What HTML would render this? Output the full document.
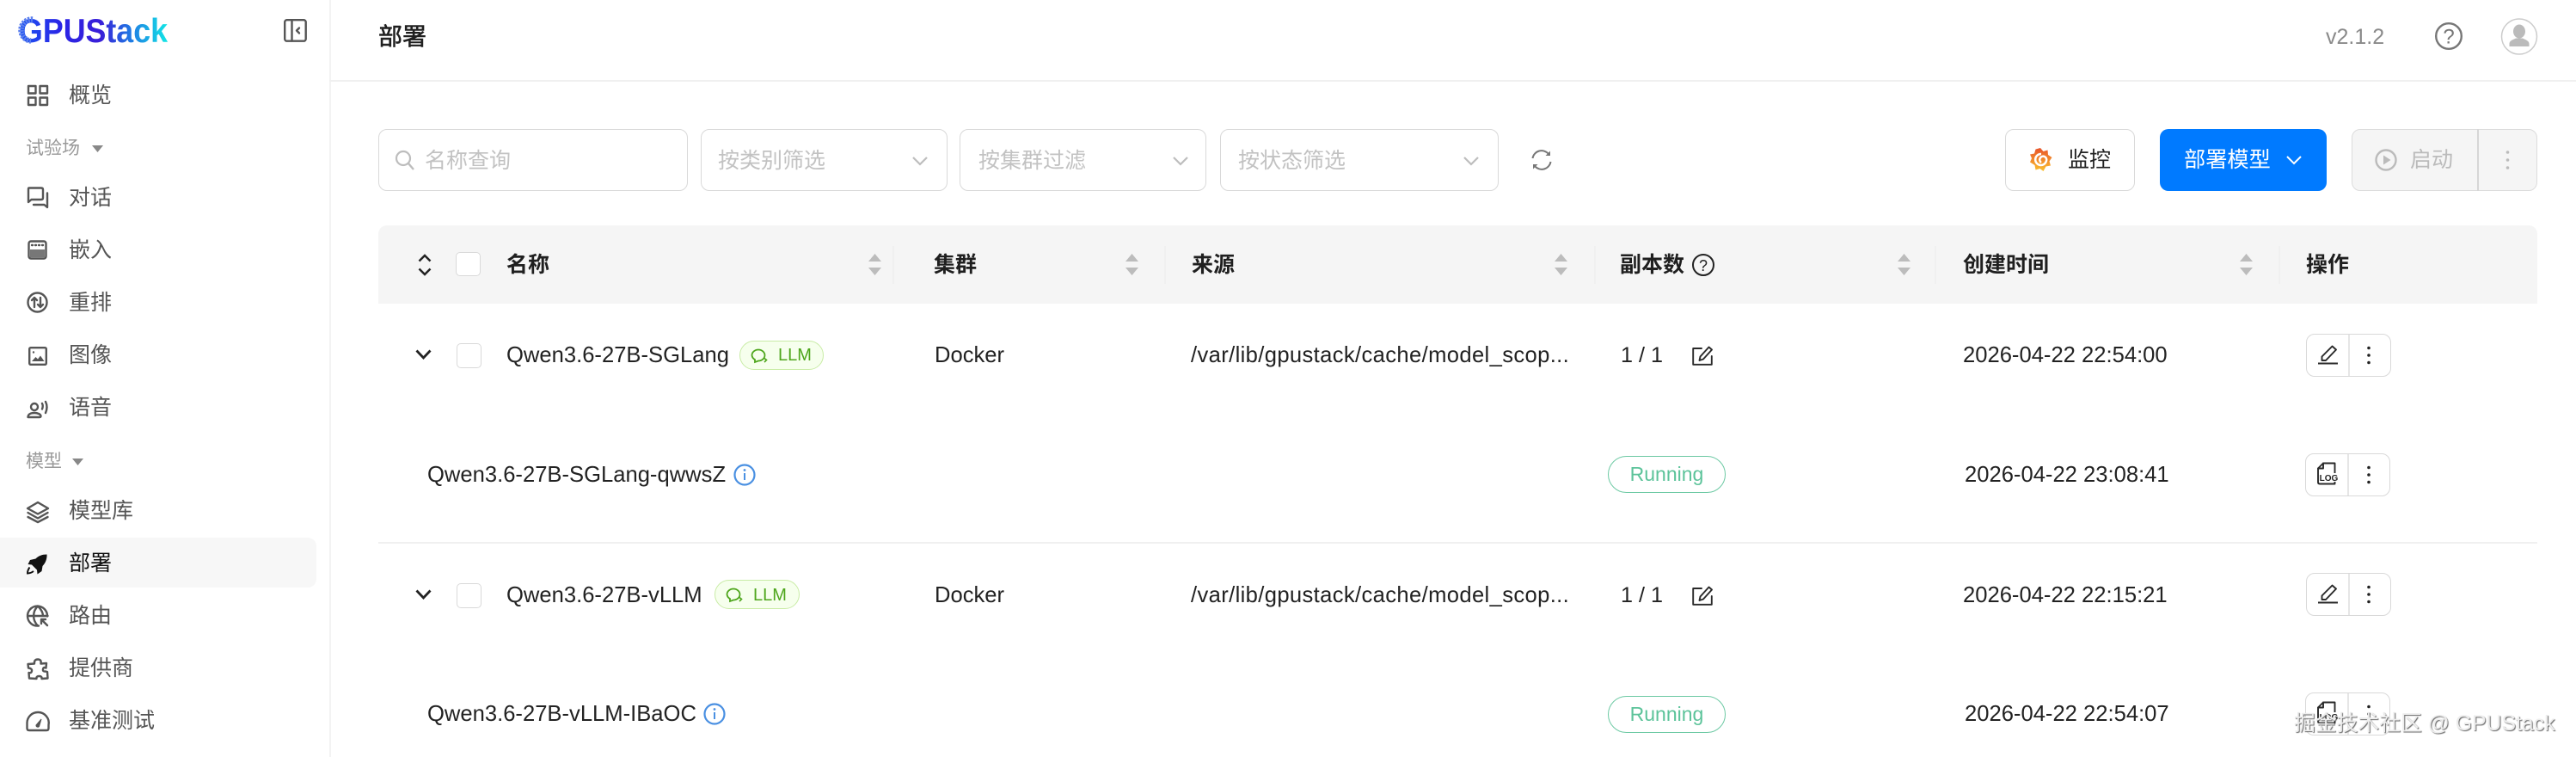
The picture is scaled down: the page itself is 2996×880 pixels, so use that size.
<!DOCTYPE html>
<html lang="zh">
<head>
<meta charset="utf-8">
<title>部署</title>
<style>
html,body{margin:0;padding:0;width:2996px;height:880px;overflow:hidden;background:#fff;}
body{position:relative;font-family:"Liberation Sans","Noto Sans CJK SC",sans-serif;font-size:25.6px;color:#222;}
.t{position:absolute;white-space:nowrap;line-height:36px;transform:translateY(-50%);}
.b{position:absolute;box-sizing:border-box;}
svg{position:absolute;overflow:visible;}
.nav{color:#555;font-size:25px;left:80px;}
.grp{color:#999;font-size:21px;left:30px;}
.ph{color:#c2c2c2;font-size:25px;}
.box{border:1.5px solid #d9d9d9;border-radius:10px;background:#fff;top:150px;height:72px;}
.th{font-weight:700;color:#1f1f1f;font-size:25px;top:308px;}
.cb{border:1.5px solid #d9d9d9;border-radius:5px;background:#fff;width:29px;height:29px;left:531px;}
.op{border:1.5px solid #d9d9d9;border-radius:10px;width:99px;height:50px;left:2682px;background:#fff;}
.op:after{content:"";position:absolute;left:48px;top:0;bottom:0;width:1.5px;background:#e6e6e6;}
.run{left:1870px;width:137px;height:43px;border:1.5px solid #6cc9a3;border-radius:22px;color:#5cc39a;font-size:23px;line-height:40px;text-align:center;}
.tag{height:34px;border:1.5px solid #c9eca6;border-radius:17px;background:#f6ffed;}
.tagt{color:#4ea61c;font-size:20px;}
.src{left:1385px;letter-spacing:.36px;}
.st{stroke:#555;fill:none;stroke-width:2.4;stroke-linecap:round;stroke-linejoin:round;}
.dk{stroke:#2a2a2a;fill:none;stroke-width:1.9;stroke-linecap:round;stroke-linejoin:round;}
</style>
</head>
<body>
<!-- sidebar -->
<div class="b" style="left:383px;top:0;width:1.5px;height:880px;background:#f3f3f3"></div>
<div class="b" style="left:383px;top:93px;width:2613px;height:1.5px;background:#f0f0f0"></div>

<svg style="left:0;top:0" width="210" height="70" viewBox="0 0 210 70">
<defs><linearGradient id="lg" gradientUnits="userSpaceOnUse" x1="22" y1="0" x2="195" y2="0">
<stop offset="0" stop-color="#1c55f2"/><stop offset=".28" stop-color="#2a25e6"/><stop offset=".55" stop-color="#3a20d8"/><stop offset=".75" stop-color="#2079e4"/><stop offset="1" stop-color="#12e6e6"/></linearGradient></defs>
<text x="22" y="49" font-family="Liberation Sans" font-weight="700" font-size="38.5" fill="url(#lg)" textLength="173" lengthAdjust="spacingAndGlyphs">GPUStack</text>
<path d="M36 19 A15.500 15.500 0 0 0 36 51 L20 51 L20 19Z" fill="#fff"/>
<path d="M38 22.500 A12.500 12.500 0 0 0 36 47.500" fill="none" stroke="#5b7fee" stroke-width="6.500" stroke-dasharray="2.200 1.200"/>
</svg>
<svg style="left:330px;top:22px" width="27" height="27" viewBox="0 0 27 27"><rect x="1.200" y="1.200" width="24.500" height="24.500" rx="2.500" class="st"/><path d="M9.500 1.500V25.500M18 10.500l-3 3 3 3" class="st"/></svg>

<!-- nav icons -->
<svg style="left:32px;top:99px" width="24" height="24" viewBox="0 0 24 24"><path d="M1 1h8.500v8.500H1zM14.500 1H23v8.500h-8.500zM1 14.500h8.500V23H1zM14.500 14.500H23V23h-8.500z" class="st"/></svg>
<svg style="left:31px;top:217px" width="26" height="26" viewBox="0 0 26 26"><path d="M17 15H5.500L2 18V2.500Q2 1.500 3 1.500H17Q19 1.500 19 3.500V13Q19 15 17 15Z" class="st"/><path d="M24 7.500V24L20.500 21H8" class="st"/></svg>
<svg style="left:32px;top:279px" width="23" height="23" viewBox="0 0 23 23"><rect x="1.500" y="1.500" width="20" height="20" rx="2.500" class="st"/><rect x="3" y="11" width="17" height="9" fill="#777"/><path d="M5 6h1M9 6h1M13 6h1M17 6h1" class="st" stroke-width="1.500"/></svg>
<svg style="left:31px;top:339px" width="25" height="25" viewBox="0 0 25 25"><circle cx="12.500" cy="12.500" r="11" class="st"/><path d="M9 18V7M6 10l3-3 3 3M16 7v11M13 15l3 3 3-3" class="st" stroke-width="1.800"/></svg>
<svg style="left:33px;top:403px" width="22" height="22" viewBox="0 0 22 22"><rect x="1.200" y="1.200" width="19.600" height="19.600" rx="1.500" class="st" stroke-width="2"/><circle cx="6" cy="6.500" r="1.200" fill="#555"/><path d="M4 17l4.500-5 2.500 2.500 3-4 4.500 6.500z" fill="#555"/></svg>
<svg style="left:31px;top:465px" width="26" height="22" viewBox="0 0 26 22"><circle cx="9" cy="8" r="4" class="st" stroke-width="2"/><path d="M1.500 20c0-3.500 3.500-5 7.500-5s7 1.500 7.500 3.500q0 1.500-1.500 1.500z" class="st" stroke-width="2"/><path d="M18 4q1.500 3 0 6.500M22 2q3 6 0 13" class="st" stroke-width="1.800"/></svg>
<svg style="left:31px;top:582px" width="26" height="26" viewBox="0 0 26 26"><path d="M13 2L25 9 13 15.500 1 9zM1.500 14L13 20.500 24.500 14M1.500 19L13 25 24.500 19" class="st" stroke-width="2"/></svg>
<svg style="left:31px;top:703px" width="26" height="26" viewBox="0 0 26 26"><path d="M14 24.500a11.500 11.500 0 1 1 10-11M1.500 13H24.500M13 1.500C6.500 8 6.500 18 13 24.500M13 1.500C17 5.500 19 9.500 19 13" class="st" stroke-width="2"/><path d="M17 17h5M17 17v5M17 17l7 7" class="st" stroke-width="2.200"/></svg>
<svg style="left:31px;top:765px" width="26" height="25" viewBox="0 0 26 25"><path d="M9 6.500q-.5-5 4-5t3.500 5L23 6l-.5 5.500q-3-1.500-3.500 1.500t3 2.500L24 16l.5 7.500-7 .5q.5-3-3-3t-3 3L3 23.500l-.5-6.500q3 1 3.500-2t-4-3.500L1.500 7z" class="st" stroke-width="2.200"/></svg>
<svg style="left:30px;top:826px" width="28" height="24" viewBox="0 0 28 24"><path d="M4 23h20q2.500 0 2.500-2.500V17A12.500 12.500 0 0 0 14 2 12.500 12.500 0 0 0 1.500 14v6.500Q1.500 23 4 23z" class="st" stroke-width="2.200"/><path d="M12 17l6-7-2.500 8.500a2 2 0 0 1-3.500-1.500z" fill="#555" stroke="#555"/></svg>

<div class="b" style="left:0;top:625px;width:368px;height:58px;background:#f7f7f7;border-radius:0 10px 10px 0"></div>
<svg style="left:31px;top:643px" width="25" height="25" viewBox="0 0 25 25"><path d="M23.500 1c.5 6-2 11-5 14l-1 6-5 3.500-.5-5-6-6-4.500-.5 2.500-5 6.500-1.500c3.500-3.500 7.500-5 13-5z" fill="#111"/><path d="M9.500 19l-3-3" stroke="#f7f7f7" stroke-width="2" fill="none"/><path d="M3.500 16.500c-1.500 2-2.500 4.500-2.500 7 2.500 0 5-1 7-2.500" fill="none" stroke="#111" stroke-width="2"/></svg>

<div class="t nav" style="top:111px">概览</div>
<div class="t grp" style="top:173px">试验场</div>
<svg style="left:107px;top:169px" width="13" height="8"><path d="M0 0H13L6.500 8z" fill="#888"/></svg>
<div class="t nav" style="top:230px">对话</div>
<div class="t nav" style="top:291px">嵌入</div>
<div class="t nav" style="top:352px">重排</div>
<div class="t nav" style="top:413px">图像</div>
<div class="t nav" style="top:474px">语音</div>
<div class="t grp" style="top:537px">模型</div>
<svg style="left:84px;top:533px" width="13" height="8"><path d="M0 0H13L6.500 8z" fill="#888"/></svg>
<div class="t nav" style="top:594px">模型库</div>
<div class="t nav" style="top:655px;color:#111">部署</div>
<div class="t nav" style="top:716px">路由</div>
<div class="t nav" style="top:777px">提供商</div>
<div class="t nav" style="top:838px">基准测试</div>

<!-- header -->
<div class="t" style="left:440px;top:43px;font-size:28px;color:#1f1f1f;-webkit-text-stroke:.6px #1f1f1f">部署</div>
<div class="t" style="left:2705px;top:43px;font-size:25px;color:#8a8a8a">v2.1.2</div>
<svg style="left:2832px;top:26px" width="32" height="32" viewBox="0 0 32 32"><circle cx="16" cy="16" r="14.800" fill="none" stroke="#777" stroke-width="2.400"/><text x="16" y="24.500" text-anchor="middle" font-size="24" font-family="Liberation Sans" fill="#777">?</text></svg>
<svg style="left:2909px;top:21px" width="42" height="43" viewBox="0 0 42 43"><circle cx="21" cy="21.500" r="20.500" fill="#fff" stroke="#ccc" stroke-width="1.500"/><ellipse cx="21" cy="15.500" rx="7" ry="8" fill="#bbb"/><path d="M9.500 33v-3c0-4 5-5 7.500-6.500h8c2.500 1.500 7.500 2.500 7.500 6.500v3z" fill="#bbb"/></svg>

<!-- filters -->
<div class="b box" style="left:440px;width:360px"></div>
<svg style="left:459px;top:174px" width="24" height="24" viewBox="0 0 24 24"><circle cx="10" cy="10" r="8" fill="none" stroke="#bdbdbd" stroke-width="2.200"/><path d="M16 16l6 7" stroke="#bdbdbd" stroke-width="2.400" fill="none"/></svg>
<div class="t ph" style="left:494px;top:187px">名称查询</div>
<div class="b box" style="left:815px;width:287px"></div>
<div class="t ph" style="left:835px;top:187px">按类别筛选</div>
<svg style="left:1061px;top:182px" width="18" height="11"><path d="M1 1l8 8 8-8" fill="none" stroke="#bdbdbd" stroke-width="2.200"/></svg>
<div class="b box" style="left:1116px;width:287px"></div>
<div class="t ph" style="left:1138px;top:187px">按集群过滤</div>
<svg style="left:1364px;top:182px" width="18" height="11"><path d="M1 1l8 8 8-8" fill="none" stroke="#bdbdbd" stroke-width="2.200"/></svg>
<div class="b box" style="left:1419px;width:324px"></div>
<div class="t ph" style="left:1440px;top:187px">按状态筛选</div>
<svg style="left:1702px;top:182px" width="18" height="11"><path d="M1 1l8 8 8-8" fill="none" stroke="#bdbdbd" stroke-width="2.200"/></svg>
<svg style="left:1780px;top:173px" width="26" height="26" viewBox="0 0 26 26"><path d="M2.500 11A10.500 10.500 0 0 1 21 6" fill="none" stroke="#777" stroke-width="2"/><path d="M23.500 15A10.500 10.500 0 0 1 5 20" fill="none" stroke="#777" stroke-width="2"/><path d="M23 2.500v5.500h-5.500zM3 23.500V18h5.500z" fill="#777"/></svg>

<!-- buttons -->
<div class="b box" style="left:2332px;width:151px"></div>
<svg style="left:2360px;top:171px" width="27" height="29" viewBox="0 0 27 29"><defs><linearGradient id="gf" x1="0" y1="0" x2="0" y2="1"><stop offset="0" stop-color="#e8542c"/><stop offset="1" stop-color="#fbc02d"/></linearGradient></defs><path d="M13 1l3.500 4 5-1.500.5 5.500 4.500 3-3 4.500 1.500 5-5.500 1-3 5.500-4-3-5 1.500-1-5.500L1 17.500 3 13 1 8.500 6 7.500 7.500 2.500z" fill="url(#gf)"/><path d="M14 8a6.500 6.500 0 1 0 6 8 4 4 0 1 0-6 2" fill="none" stroke="#fff" stroke-width="2.500"/></svg>
<div class="t" style="left:2405px;top:186px;font-size:25px;color:#222">监控</div>
<div class="b" style="left:2512px;top:150px;width:194px;height:72px;background:#007aff;border-radius:10px"></div>
<div class="t" style="left:2540px;top:186px;font-size:25.2px;color:#fff">部署模型</div>
<svg style="left:2659px;top:181px" width="18" height="11"><path d="M1 1l8 8 8-8" fill="none" stroke="#fff" stroke-width="2"/></svg>
<div class="b" style="left:2735px;top:150px;width:216px;height:72px;background:#f5f5f5;border:1.5px solid #dcdcdc;border-radius:10px"></div>
<div class="b" style="left:2881px;top:150px;width:1.5px;height:72px;background:#d6d6d6"></div>
<svg style="left:2762px;top:173px" width="26" height="26" viewBox="0 0 26 26"><circle cx="13" cy="13" r="11.500" fill="none" stroke="#bbb" stroke-width="2.400"/><path d="M10 7.500l8.500 5.500-8.500 5.500z" fill="#bbb"/></svg>
<div class="t" style="left:2803px;top:186px;font-size:25px;color:#bbb">启动</div>
<svg style="left:2914px;top:174px" width="5" height="24"><circle cx="2.500" cy="3" r="1.800" fill="#bbb"/><circle cx="2.500" cy="12" r="1.800" fill="#bbb"/><circle cx="2.500" cy="21" r="1.800" fill="#bbb"/></svg>

<!-- table head -->
<div class="b" style="left:440px;top:262px;width:2511px;height:91px;background:#f5f5f5;border-radius:10px 10px 0 0"></div>
<div class="b" style="left:1038px;top:286px;width:1.5px;height:44px;background:#f0f0f0"></div>
<div class="b" style="left:1354px;top:286px;width:1.5px;height:44px;background:#f0f0f0"></div>
<div class="b" style="left:1854px;top:286px;width:1.5px;height:44px;background:#f0f0f0"></div>
<div class="b" style="left:2250px;top:286px;width:1.5px;height:44px;background:#f0f0f0"></div>
<div class="b" style="left:2650px;top:286px;width:1.5px;height:44px;background:#f0f0f0"></div>
<svg style="left:486px;top:295px" width="16" height="26"><path d="M1.500 8.500L8 2l6.500 6.500M1.500 17.500L8 24l6.500-6.500" fill="none" stroke="#222" stroke-width="2.500"/></svg>
<div class="b cb" style="top:293px;left:530px;height:28px"></div>
<div class="t th" style="left:589px">名称</div>
<div class="t th" style="left:1086px">集群</div>
<div class="t th" style="left:1386px">来源</div>
<div class="t th" style="left:1884px">副本数</div>
<div class="t th" style="left:2283px">创建时间</div>
<div class="t th" style="left:2682px">操作</div>
<svg style="left:1967px;top:294px" width="28" height="28" viewBox="0 0 28 28"><circle cx="14" cy="14" r="12" fill="none" stroke="#222" stroke-width="2"/><text x="14" y="21" text-anchor="middle" font-size="18" font-family="Liberation Sans" fill="#222">?</text></svg>
<svg style="left:1010px;top:295px" width="15" height="25"><path d="M0 9L7.500 0 15 9zM0 16H15L7.500 25z" fill="#bcbcbc"/></svg>
<svg style="left:1309px;top:295px" width="15" height="25"><path d="M0 9L7.500 0 15 9zM0 16H15L7.500 25z" fill="#bcbcbc"/></svg>
<svg style="left:1808px;top:295px" width="15" height="25"><path d="M0 9L7.500 0 15 9zM0 16H15L7.500 25z" fill="#bcbcbc"/></svg>
<svg style="left:2207px;top:295px" width="15" height="25"><path d="M0 9L7.500 0 15 9zM0 16H15L7.500 25z" fill="#bcbcbc"/></svg>
<svg style="left:2605px;top:295px" width="15" height="25"><path d="M0 9L7.500 0 15 9zM0 16H15L7.500 25z" fill="#bcbcbc"/></svg>

<!-- row 1 -->
<svg style="left:483px;top:406px" width="19" height="13"><path d="M1.500 1.500L9.500 10l8-8.500" fill="none" stroke="#222" stroke-width="2.800"/></svg>
<div class="b cb" style="top:399px"></div>
<div class="t" style="left:589px;top:413px">Qwen3.6-27B-SGLang</div>
<div class="b tag" style="left:860px;top:396px;width:98px"></div>
<svg style="left:873px;top:405px" width="20" height="18" viewBox="0 0 20 18"><path d="M9 1.500a7.500 6.500 0 0 1 7.500 6.500 7.500 6.500 0 0 1-7.500 6.500L5 16v-3A7 6.500 0 0 1 1.500 8 7.500 6.500 0 0 1 9 1.500z" fill="none" stroke="#4ea61c" stroke-width="1.800"/><path d="M16 11.500l2.500 2-2.500 2.500" fill="none" stroke="#4ea61c" stroke-width="1.600"/></svg>
<div class="t tagt" style="left:905px;top:413px">LLM</div>
<div class="t" style="left:1087px;top:413px">Docker</div>
<div class="t src" style="top:413px">/var/lib/gpustack/cache/model_scop...</div>
<div class="t" style="left:1885px;top:413px;font-size:25.2px">1 / 1</div>
<svg style="left:1968px;top:402px" width="24" height="23" viewBox="0 0 24 23"><path d="M11 3H1.200V21.800H22.800V12" class="dk" stroke-linecap="square"/><path d="M19.500 1.500L23 4.500 13 15.500 8.500 17 9.500 12.500z" class="dk"/></svg>
<div class="t" style="left:2283px;top:413px">2026-04-22 22:54:00</div>
<div class="b op" style="top:388px"></div>
<svg style="left:2696px;top:401px" width="23" height="23" viewBox="0 0 23 23"><path d="M16.500 1.500L21 5.500 9 18H4.500v-4.500z" class="dk"/><path d="M0 21.500H23" stroke="#2a2a2a" stroke-width="2"/></svg>
<svg style="left:2752px;top:402px" width="6" height="22"><circle cx="3" cy="2.500" r="1.800" fill="#222"/><circle cx="3" cy="11" r="1.800" fill="#222"/><circle cx="3" cy="19.500" r="1.800" fill="#222"/></svg>

<!-- sub row 1 -->
<div class="t" style="left:497px;top:552px">Qwen3.6-27B-SGLang-qwwsZ</div>
<svg style="left:853px;top:539px" width="26" height="26" viewBox="0 0 26 26"><circle cx="13" cy="13" r="11.500" fill="none" stroke="#4a90e2" stroke-width="2.200"/><path d="M13 11v8" stroke="#4a90e2" stroke-width="2"/><circle cx="13" cy="7.500" r="1.400" fill="#4a90e2"/></svg>
<div class="b run" style="top:530px">Running</div>
<div class="t" style="left:2285px;top:552px">2026-04-22 23:08:41</div>
<div class="b op" style="top:527px;left:2681px"></div>
<svg style="left:2694px;top:537px" width="24" height="27" viewBox="0 0 24 27"><path d="M8 1.500H21.500V25.500H4Q2 25.500 2 23.500V7.500z" class="dk"/><path d="M8 1.500V7.500H2" class="dk"/><rect x="5" y="13" width="19" height="10" fill="#fff"/><text x="14.500" y="22" text-anchor="middle" font-size="10" font-weight="700" font-family="Liberation Sans" fill="#222">LOG</text></svg>
<svg style="left:2752px;top:541px" width="6" height="22"><circle cx="3" cy="2.500" r="1.800" fill="#222"/><circle cx="3" cy="11" r="1.800" fill="#222"/><circle cx="3" cy="19.500" r="1.800" fill="#222"/></svg>

<div class="b" style="left:440px;top:630px;width:2511px;height:1.5px;background:#f0f0f0"></div>

<!-- row 2 -->
<svg style="left:483px;top:685px" width="19" height="13"><path d="M1.500 1.500L9.500 10l8-8.500" fill="none" stroke="#222" stroke-width="2.800"/></svg>
<div class="b cb" style="top:678px"></div>
<div class="t" style="left:589px;top:692px">Qwen3.6-27B-vLLM</div>
<div class="b tag" style="left:831px;top:674px;width:99px"></div>
<svg style="left:844px;top:683px" width="20" height="18" viewBox="0 0 20 18"><path d="M9 1.500a7.500 6.500 0 0 1 7.500 6.500 7.500 6.500 0 0 1-7.500 6.500L5 16v-3A7 6.500 0 0 1 1.500 8 7.500 6.500 0 0 1 9 1.500z" fill="none" stroke="#4ea61c" stroke-width="1.800"/><path d="M16 11.500l2.500 2-2.500 2.500" fill="none" stroke="#4ea61c" stroke-width="1.600"/></svg>
<div class="t tagt" style="left:876px;top:692px">LLM</div>
<div class="t" style="left:1087px;top:692px">Docker</div>
<div class="t src" style="top:692px">/var/lib/gpustack/cache/model_scop...</div>
<div class="t" style="left:1885px;top:692px;font-size:25.2px">1 / 1</div>
<svg style="left:1968px;top:681px" width="24" height="23" viewBox="0 0 24 23"><path d="M11 3H1.200V21.800H22.800V12" class="dk" stroke-linecap="square"/><path d="M19.500 1.500L23 4.500 13 15.500 8.500 17 9.500 12.500z" class="dk"/></svg>
<div class="t" style="left:2283px;top:692px">2026-04-22 22:15:21</div>
<div class="b op" style="top:666px"></div>
<svg style="left:2696px;top:679px" width="23" height="23" viewBox="0 0 23 23"><path d="M16.500 1.500L21 5.500 9 18H4.500v-4.500z" class="dk"/><path d="M0 21.500H23" stroke="#2a2a2a" stroke-width="2"/></svg>
<svg style="left:2752px;top:680px" width="6" height="22"><circle cx="3" cy="2.500" r="1.800" fill="#222"/><circle cx="3" cy="11" r="1.800" fill="#222"/><circle cx="3" cy="19.500" r="1.800" fill="#222"/></svg>

<!-- sub row 2 -->
<div class="t" style="left:497px;top:830px">Qwen3.6-27B-vLLM-IBaOC</div>
<svg style="left:818px;top:817px" width="26" height="26" viewBox="0 0 26 26"><circle cx="13" cy="13" r="11.500" fill="none" stroke="#4a90e2" stroke-width="2.200"/><path d="M13 11v8" stroke="#4a90e2" stroke-width="2"/><circle cx="13" cy="7.500" r="1.400" fill="#4a90e2"/></svg>
<div class="b run" style="top:809px">Running</div>
<div class="t" style="left:2285px;top:830px">2026-04-22 22:54:07</div>
<div class="b op" style="top:805px;left:2681px"></div>
<svg style="left:2694px;top:815px" width="24" height="27" viewBox="0 0 24 27"><path d="M8 1.500H21.500V25.500H4Q2 25.500 2 23.500V7.500z" class="dk"/><path d="M8 1.500V7.500H2" class="dk"/><rect x="5" y="13" width="19" height="10" fill="#fff"/><text x="14.500" y="22" text-anchor="middle" font-size="10" font-weight="700" font-family="Liberation Sans" fill="#222">LOG</text></svg>
<svg style="left:2752px;top:819px" width="6" height="22"><circle cx="3" cy="2.500" r="1.800" fill="#222"/><circle cx="3" cy="11" r="1.800" fill="#222"/><circle cx="3" cy="19.500" r="1.800" fill="#222"/></svg>

<!-- watermark -->
<div class="t" style="left:2668px;top:842px;font-size:24.8px;color:#ededed;text-shadow:1px 1px 1px #666">掘金技术社区 @ GPUStack</div>
</body>
</html>
